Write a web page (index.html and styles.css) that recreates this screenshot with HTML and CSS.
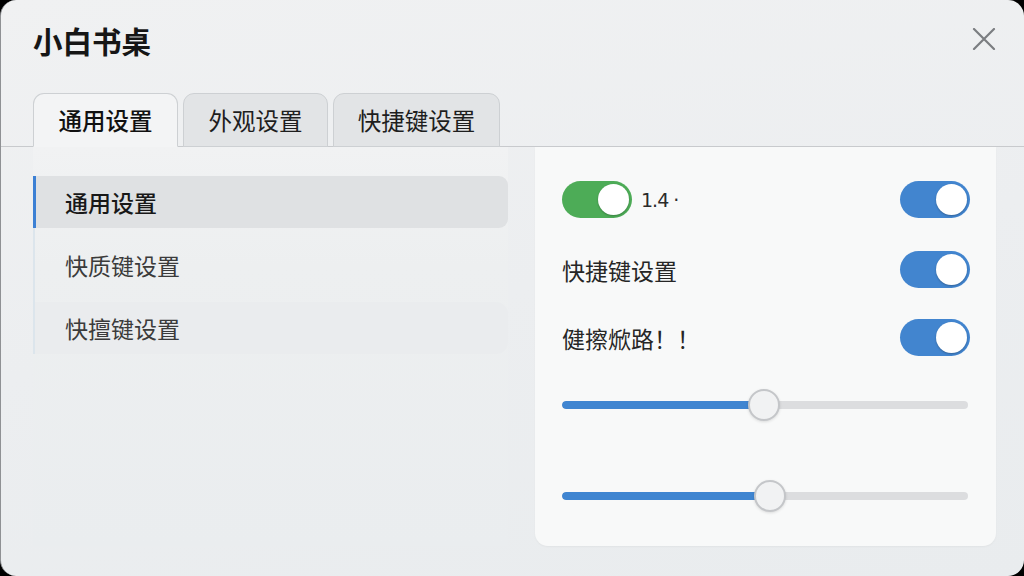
FILE: index.html
```html
<!DOCTYPE html>
<html lang="zh-CN">
<head>
    <meta charset="UTF-8">
    <meta name="viewport" content="width=device-width, initial-scale=1.0">
    <title>小白书桌 - 设置</title>
    <link rel="stylesheet" href="styles.css">
</head>
<body>
    <div class="window">
        <!-- 标题栏 -->
        <header class="titlebar">
            <h1>小白书桌</h1>
            <button class="close-btn" aria-label="关闭">
                <svg width="24" height="22" viewBox="0 0 24 22">
                    <path d="M2 1 L22 21 M22 1 L2 21" stroke="#7b7d81" stroke-width="2.2" stroke-linecap="round" fill="none"/>
                </svg>
            </button>
        </header>

        <!-- 顶部标签页 -->
        <nav class="tabs">
            <div class="tab active">通用设置</div>
            <div class="tab">外观设置</div>
            <div class="tab wide">快捷键设置</div>
        </nav>

        <div class="content">
            <!-- 左侧菜单 -->
            <aside class="sidebar">
                <ul class="side-list">
                    <li class="side-item active">通用设置</li>
                    <li class="side-item">快质键设置</li>
                    <li class="side-item hover">快擅键设置</li>
                </ul>
            </aside>

            <!-- 右侧设置面板 -->
            <section class="panel">
                <div class="row">
                    <div class="row-left">
                        <span class="switch green on"><span class="knob"></span></span>
                        <span class="version">1.4 ·</span>
                    </div>
                    <span class="switch on"><span class="knob"></span></span>
                </div>
                <div class="row">
                    <span class="label">快捷键设置</span>
                    <span class="switch on"><span class="knob"></span></span>
                </div>
                <div class="row">
                    <span class="label">健擦焮路！！</span>
                    <span class="switch on"><span class="knob"></span></span>
                </div>

                <div class="slider first">
                    <div class="track"><div class="fill" style="width: 49.8%"></div></div>
                    <span class="thumb" style="left: 49.8%"></span>
                </div>
                <div class="slider second">
                    <div class="track"><div class="fill" style="width: 51.2%"></div></div>
                    <span class="thumb" style="left: 51.2%"></span>
                </div>
            </section>
        </div>
    </div>
</body>
</html>
```

FILE: styles.css
```css
* {
    box-sizing: border-box;
}

html, body {
    margin: 0;
    padding: 0;
    background: #000;
}

body {
    font-family: "Noto Sans CJK SC", "Noto Sans", sans-serif;
    color: #222;
}

.window {
    width: 1024px;
    height: 576px;
    border-radius: 16px;
    background: linear-gradient(170deg, #f0f1f2 0%, #eceef0 50%, #e9ecee 100%);
    border-left: 1px solid #8f9194;
    display: flex;
    flex-direction: column;
    overflow: hidden;
}

/* 标题栏 */
.titlebar {
    display: flex;
    justify-content: space-between;
    align-items: center;
    padding: 20px 28px 0 32px;
}

.titlebar h1 {
    margin: 0;
    font-size: 29.5px;
    line-height: 40px;
    font-weight: 700;
    color: #161616;
}

.close-btn {
    border: none;
    background: none;
    padding: 0;
    margin-top: -3px;
    display: flex;
    cursor: pointer;
}

/* 标签页 */
.tabs {
    display: flex;
    gap: 5px;
    margin-top: 33px;
    padding-left: 32px;
    border-bottom: 1px solid #c8cacd;
    height: 54px;
}

.tab {
    width: 145px;
    height: 54px;
    margin-bottom: -1px;
    display: flex;
    align-items: center;
    justify-content: center;
    white-space: nowrap;
    font-size: 23.5px;
    color: #1e1e1e;
    background: #e2e4e6;
    border: 1px solid #cdd0d3;
    border-radius: 11px 11px 0 0;
}

.tab.wide {
    width: 167px;
}

.tab.active {
    background: #f3f4f5;
    border-bottom-color: #f3f4f5;
    font-weight: 500;
    color: #111;
}

/* 主体区域 */
.content {
    flex: 1;
    display: flex;
    gap: 27px;
    padding: 0 28px 30px 32px;
}

.sidebar {
    width: 475px;
    padding-top: 29px;
    background: linear-gradient(180deg, #f1f2f3 0%, #edeff0 30%, #eaedef 100%);
}

.side-list {
    list-style: none;
    margin: 0;
    padding: 0;
    border-left: 2px solid #dce5ec;
    display: flex;
    flex-direction: column;
    gap: 11px;
}

.side-item {
    height: 52px;
    display: flex;
    align-items: center;
    padding-left: 30px;
    font-size: 23px;
    color: #3b3b3b;
    border-radius: 0 9px 9px 0;
}

.side-item.active {
    margin-left: -2px;
    border-left: 3px solid #3c80d4;
    padding-left: 29px;
    background: #dfe1e3;
    color: #181818;
    font-weight: 500;
}

.side-item.hover {
    background: #eaecee;
    border-radius: 0 12px 12px 0;
}

/* 右侧面板 */
.panel {
    flex: 1;
    background: #f8f9f9;
    border-radius: 0 0 13px 13px;
    padding: 34px 26px 0 27px;
    box-shadow: 0 1px 2px rgba(0, 0, 0, 0.04);
}

.row {
    height: 37px;
    display: flex;
    align-items: center;
    justify-content: space-between;
    margin-bottom: 33px;
}

.row:nth-child(2) {
    margin-bottom: 31px;
}

.row-left {
    display: flex;
    align-items: center;
    gap: 9px;
}

.version {
    font-family: "DejaVu Sans", sans-serif;
    font-size: 19px;
    letter-spacing: -1px;
    color: #2b2b2b;
}

.label {
    font-size: 23px;
    color: #262626;
}

.switch {
    position: relative;
    width: 70px;
    height: 37px;
    border-radius: 19px;
    background: #4285cf;
    display: inline-block;
    flex-shrink: 0;
}

.switch.green {
    background: #4dac57;
}

.switch .knob {
    position: absolute;
    top: 3px;
    left: 3px;
    width: 31px;
    height: 31px;
    border-radius: 50%;
    background: #fff;
    box-shadow: 0 1px 2px rgba(0, 0, 0, 0.25);
}

.switch.on .knob {
    left: 36px;
}

/* 滑块 */
.slider {
    position: relative;
    height: 32px;
    margin-right: 2px;
}

.slider.first {
    margin-top: 7px;
}

.slider.second {
    margin-top: 59px;
}

.track {
    position: absolute;
    top: 12px;
    left: 0;
    right: 0;
    height: 8px;
    border-radius: 4px;
    background: #dcdddf;
    overflow: hidden;
}

.fill {
    height: 100%;
    background: #3f85d1;
    border-radius: 4px;
}

.thumb {
    position: absolute;
    top: 0;
    width: 32px;
    height: 32px;
    margin-left: -16px;
    border-radius: 50%;
    background: #f1f2f3;
    border: 2px solid #c4c6c9;
    box-shadow: 0 1px 3px rgba(0, 0, 0, 0.12);
}
```
